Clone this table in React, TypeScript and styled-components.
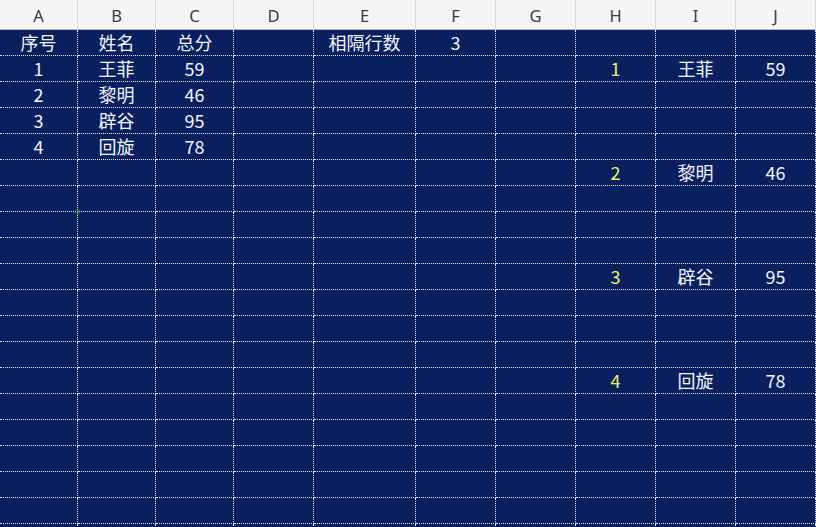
import React from "react";
import styled, { createGlobalStyle } from "styled-components";

const GlobalStyle = createGlobalStyle`
  html, body { margin: 0; padding: 0; background: #0a1f5e; overflow: hidden; }
  #root { width: 816px; height: 527px; overflow: hidden; }
`;

const COLS = [78, 78, 78, 80, 102, 80, 80, 80, 80, 80];
const LETTERS = ["A", "B", "C", "D", "E", "F", "G", "H", "I", "J"];
const template = COLS.map((w) => `${w}px`).join(" ");

const Sheet = styled.div`
  position: relative;
  width: 816px;
  height: 527px;
  overflow: hidden;
  background: #0a1f5e;
  font-family: "Noto Sans CJK SC", "Noto Sans", sans-serif;
`;

const HeaderRow = styled.div`
  display: grid;
  grid-template-columns: ${template};
  height: 30px;
  background: #f5f5f5;
  border-bottom: 1px solid #b9b9b9;
  box-sizing: border-box;
`;

const HeaderCell = styled.div`
  display: flex;
  align-items: center;
  justify-content: center;
  border-right: 1px solid #dadada;
  font-family: "Noto Sans", "Open Sans", sans-serif;
  font-size: 16.5px;
  color: #3c3c3c;
  box-sizing: border-box;
  padding-top: 2px;
`;

const Body = styled.div`
  display: flex;
  flex-direction: column;
`;

const Row = styled.div`
  display: grid;
  grid-template-columns: ${template};
  height: 26px;
`;

const Cell = styled.div<{ $accent?: boolean }>`
  display: flex;
  align-items: center;
  justify-content: center;
  box-sizing: border-box;
  border-right: 1px dotted #e8edf7;
  border-bottom: 1px dotted #e8edf7;
  color: ${(p) => (p.$accent ? "#e2f46e" : "#f2f4fa")};
  font-size: 18px;
  line-height: 1;
  padding-bottom: 2px;
  white-space: nowrap;
`;

const Handle = styled.div`
  position: absolute;
  left: 75px;
  top: 209px;
  width: 5px;
  height: 5px;
  border-radius: 50%;
  background: rgba(46, 125, 50, 0.75);
  filter: blur(1px);
`;

type RowData = string[];

const empty = (): RowData => Array(10).fill("");

const buildRows = (): RowData[] => {
  const rows: RowData[] = [];
  for (let i = 0; i < 20; i++) rows.push(empty());
  rows[0] = ["序号", "姓名", "总分", "", "相隔行数", "3", "", "", "", ""];
  const people = [
    ["1", "王菲", "59"],
    ["2", "黎明", "46"],
    ["3", "辟谷", "95"],
    ["4", "回旋", "78"],
  ];
  people.forEach((p, idx) => {
    rows[1 + idx][0] = p[0];
    rows[1 + idx][1] = p[1];
    rows[1 + idx][2] = p[2];
    const r = 1 + idx * 4;
    rows[r][7] = p[0];
    rows[r][8] = p[1];
    rows[r][9] = p[2];
  });
  return rows;
};

export default function App() {
  const rows = buildRows();
  return (
    <>
      <GlobalStyle />
      <Sheet>
        <HeaderRow>
          {LETTERS.map((l) => (
            <HeaderCell key={l}>{l}</HeaderCell>
          ))}
        </HeaderRow>
        <Body>
          {rows.map((r, ri) => (
            <Row key={ri}>
              {r.map((v, ci) => (
                <Cell key={ci} $accent={ci === 7}>
                  {v}
                </Cell>
              ))}
            </Row>
          ))}
        </Body>
        <Handle />
      </Sheet>
    </>
  );
}
